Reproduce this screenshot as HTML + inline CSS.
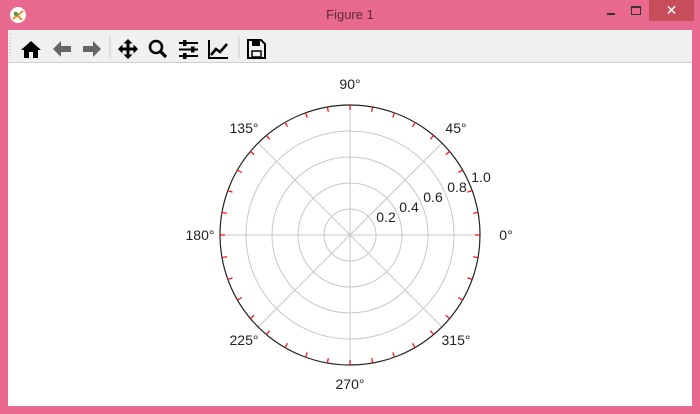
<!DOCTYPE html>
<html><head><meta charset="utf-8"><style>
html,body{margin:0;padding:0;width:700px;height:414px;overflow:hidden;background:#e8688f;font-family:"Liberation Sans","DejaVu Sans",sans-serif}
#title{position:absolute;left:0;top:0;width:700px;height:30px;text-align:center;line-height:30px;font-size:13px;color:#5a2a3a}
#close{position:absolute;left:649px;top:0;width:45px;height:21px;background:#c84d5a;color:#fff;text-align:center;line-height:21px;font-size:14px}
#tb{position:absolute;left:8px;top:30px;width:684px;height:32px;background:#f0f0f0;border-bottom:1px solid #cfcfcf}
#plot{position:absolute;left:8px;top:63px;width:684px;height:343px;background:#fff}
</style></head><body>
<div id="title">Figure 1</div>
<svg style="position:absolute;left:9px;top:6px" width="18" height="18"><circle cx="9" cy="9" r="8" fill="#fff"/><path d="M4 13L14 5M5 6l8 8" stroke="#e89030" stroke-width="2"/><circle cx="7" cy="8" r="2" fill="#4a9a40"/></svg>
<div style="position:absolute;left:607px;top:13px;width:8px;height:2px;background:#333"></div>
<div style="position:absolute;left:631px;top:6px;width:8px;height:6px;border:1px solid #333;border-top-width:2px"></div>
<div id="close">✕</div>
<div id="tb">
<svg width="684" height="32">
<g fill="#000">
<path d="M13 20l10-9 10 9h-3v8h-5v-6h-4v6h-5v-8z"/>
<path d="M45 19l8-8v5h10v6h-10v5z" fill="#666"/>
<path d="M93 19l-8-8v5h-10v6h10v5z" fill="#666"/>
<path d="M120 9l4.5 4.5h-3v4h4v-3l4.5 4.5-4.5 4.5v-3h-4v4h3l-4.5 4.5-4.5-4.5h3v-4h-4v3l-4.5-4.5 4.5-4.5v3h4v-4h-3z"/>
<circle cx="148" cy="17" r="6" fill="none" stroke="#000" stroke-width="2.6"/>
<path d="M152 21l6 6" stroke="#000" stroke-width="3.2"/>
<path d="M171 13h19M171 19.5h19M171 26h19" stroke="#000" stroke-width="2"/>
<rect x="175" y="10" width="3.5" height="6"/><rect x="183" y="16.5" width="3.5" height="6"/><rect x="175" y="23" width="3.5" height="6"/>
<path d="M201 10v18h19" stroke="#000" stroke-width="2" fill="none"/>
<path d="M203 25l5-6 4 3 7-8" stroke="#000" stroke-width="2.6" fill="none"/>
<path d="M240 10h13l4 4v14h-17z" fill="none" stroke="#000" stroke-width="2"/>
<rect x="244" y="11" width="8" height="5"/><rect x="244" y="21" width="9" height="6" fill="none" stroke="#000" stroke-width="1.5"/>
</g>
<path d="M102 6v22M231 6v22" stroke="#ccc"/>
<path d="M2 4v26" stroke="#bbb" stroke-dasharray="1 2"/>
</svg></div>
<div id="plot"></div>
<svg style="position:absolute;left:0;top:0" width="700" height="414" font-size="14" fill="#222">
<g fill="none" stroke="#c8c8c8" stroke-width="1">
<circle cx="350" cy="235" r="26"/><circle cx="350" cy="235" r="52"/><circle cx="350" cy="235" r="78"/><circle cx="350" cy="235" r="104"/>
<path d="M220 235h260M350 105v260M258 143L442 327M442 143L258 327"/>
</g>
<circle cx="350" cy="235" r="130" fill="none" stroke="#222" stroke-width="1.2"/>
<g stroke="#f00" stroke-width="1.2">
<line x1="475" y1="235" x2="480" y2="235" transform="rotate(0 350 235)"/><line x1="475" y1="235" x2="480" y2="235" transform="rotate(10 350 235)"/><line x1="475" y1="235" x2="480" y2="235" transform="rotate(20 350 235)"/><line x1="475" y1="235" x2="480" y2="235" transform="rotate(30 350 235)"/><line x1="475" y1="235" x2="480" y2="235" transform="rotate(40 350 235)"/><line x1="475" y1="235" x2="480" y2="235" transform="rotate(50 350 235)"/><line x1="475" y1="235" x2="480" y2="235" transform="rotate(60 350 235)"/><line x1="475" y1="235" x2="480" y2="235" transform="rotate(70 350 235)"/><line x1="475" y1="235" x2="480" y2="235" transform="rotate(80 350 235)"/><line x1="475" y1="235" x2="480" y2="235" transform="rotate(90 350 235)"/><line x1="475" y1="235" x2="480" y2="235" transform="rotate(100 350 235)"/><line x1="475" y1="235" x2="480" y2="235" transform="rotate(110 350 235)"/><line x1="475" y1="235" x2="480" y2="235" transform="rotate(120 350 235)"/><line x1="475" y1="235" x2="480" y2="235" transform="rotate(130 350 235)"/><line x1="475" y1="235" x2="480" y2="235" transform="rotate(140 350 235)"/><line x1="475" y1="235" x2="480" y2="235" transform="rotate(150 350 235)"/><line x1="475" y1="235" x2="480" y2="235" transform="rotate(160 350 235)"/><line x1="475" y1="235" x2="480" y2="235" transform="rotate(170 350 235)"/><line x1="475" y1="235" x2="480" y2="235" transform="rotate(180 350 235)"/><line x1="475" y1="235" x2="480" y2="235" transform="rotate(190 350 235)"/><line x1="475" y1="235" x2="480" y2="235" transform="rotate(200 350 235)"/><line x1="475" y1="235" x2="480" y2="235" transform="rotate(210 350 235)"/><line x1="475" y1="235" x2="480" y2="235" transform="rotate(220 350 235)"/><line x1="475" y1="235" x2="480" y2="235" transform="rotate(230 350 235)"/><line x1="475" y1="235" x2="480" y2="235" transform="rotate(240 350 235)"/><line x1="475" y1="235" x2="480" y2="235" transform="rotate(250 350 235)"/><line x1="475" y1="235" x2="480" y2="235" transform="rotate(260 350 235)"/><line x1="475" y1="235" x2="480" y2="235" transform="rotate(270 350 235)"/><line x1="475" y1="235" x2="480" y2="235" transform="rotate(280 350 235)"/><line x1="475" y1="235" x2="480" y2="235" transform="rotate(290 350 235)"/><line x1="475" y1="235" x2="480" y2="235" transform="rotate(300 350 235)"/><line x1="475" y1="235" x2="480" y2="235" transform="rotate(310 350 235)"/><line x1="475" y1="235" x2="480" y2="235" transform="rotate(320 350 235)"/><line x1="475" y1="235" x2="480" y2="235" transform="rotate(330 350 235)"/><line x1="475" y1="235" x2="480" y2="235" transform="rotate(340 350 235)"/><line x1="475" y1="235" x2="480" y2="235" transform="rotate(350 350 235)"/>
</g>
<g text-anchor="middle">
<text x="350" y="89">90°</text>
<text x="456" y="133">45°</text>
<text x="244" y="133">135°</text>
<text x="200" y="240">180°</text>
<text x="506" y="240">0°</text>
<text x="244" y="345">225°</text>
<text x="350" y="389">270°</text>
<text x="456" y="345">315°</text>
<text x="386" y="222">0.2</text>
<text x="409" y="212">0.4</text>
<text x="433" y="202">0.6</text>
<text x="457" y="192">0.8</text>
<text x="481" y="182">1.0</text>
</g>
</svg>
</body></html>
